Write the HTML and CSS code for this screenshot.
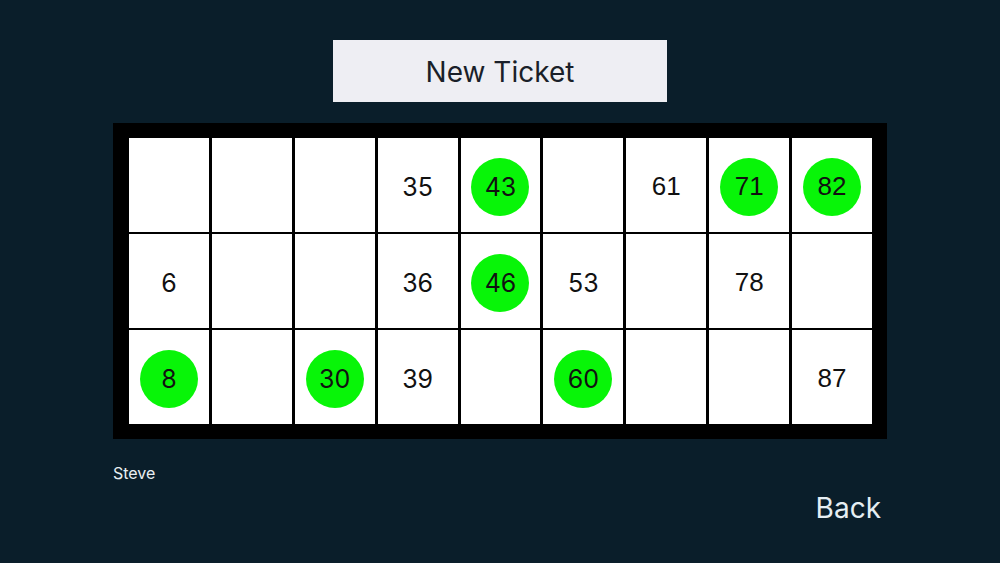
FILE: index.html
```html
<!DOCTYPE html>
<html>
<head>
<meta charset="utf-8">
<link rel="stylesheet" href="styles.css">
</head>
<body>
<div class="page">
  <div class="top">
    <div class="new-ticket">New Ticket</div>
  </div>
  <div class="ticket">
    <div class="grid">
      <div class="cell"></div>
      <div class="cell"></div>
      <div class="cell"></div>
      <div class="cell">35</div>
      <div class="cell"><span class="ball">43</span></div>
      <div class="cell"></div>
      <div class="cell alt">61</div>
      <div class="cell alt"><span class="ball">71</span></div>
      <div class="cell alt"><span class="ball">82</span></div>

      <div class="cell">6</div>
      <div class="cell"></div>
      <div class="cell"></div>
      <div class="cell">36</div>
      <div class="cell"><span class="ball">46</span></div>
      <div class="cell">53</div>
      <div class="cell alt"></div>
      <div class="cell alt">78</div>
      <div class="cell alt"></div>

      <div class="cell"><span class="ball">8</span></div>
      <div class="cell"></div>
      <div class="cell"><span class="ball">30</span></div>
      <div class="cell">39</div>
      <div class="cell"></div>
      <div class="cell"><span class="ball">60</span></div>
      <div class="cell alt"></div>
      <div class="cell alt"></div>
      <div class="cell alt">87</div>
    </div>
  </div>
  <div class="player">Steve</div>
  <div class="bottom">
    <div class="back">Back</div>
  </div>
</div>
</body>
</html>
```
FILE: styles.css
```css
html, body {
  margin: 0;
  padding: 0;
}
body {
  background: #0a1e2a;
  font-family: "Inter", "Lato", sans-serif;
  width: 1000px;
  height: 563px;
  overflow: hidden;
}
.page {
  display: flex;
  flex-direction: column;
  padding: 40px 113px 0 113px;
}
.top {
  display: flex;
  justify-content: center;
}
.new-ticket {
  width: 334px;
  height: 62px;
  background: #eeeef3;
  color: #1a1f29;
  font-size: 28px;
  padding-top: 2px;
  box-sizing: border-box;
  display: flex;
  align-items: center;
  justify-content: center;
}
.ticket {
  margin-top: 21px;
  background: #000;
  padding: 15px 15px 15px 16px;
}
.grid {
  display: grid;
  grid-template-columns: repeat(9, 1fr);
  grid-template-rows: repeat(3, 94px);
  gap: 2px 3px;
  background: #000;
}
.cell {
  background: #fff;
  display: flex;
  align-items: center;
  justify-content: center;
  font-size: 25px;
  color: #111;
  padding-top: 3px;
  box-sizing: border-box;
}
.cell.alt {
  font-family: "Liberation Sans", Arial, sans-serif;
  font-size: 26px;
}
.ball {
  width: 58px;
  height: 58px;
  border-radius: 50%;
  background: #08f508;
  display: flex;
  align-items: center;
  justify-content: center;
}
.player {
  margin-top: 24px;
  color: #e8eef2;
  font-size: 16px;
}
.bottom {
  display: flex;
  justify-content: flex-end;
  margin-top: 8px;
  padding-right: 6px;
}
.back {
  color: #e6eef2;
  font-size: 28px;
}
```
